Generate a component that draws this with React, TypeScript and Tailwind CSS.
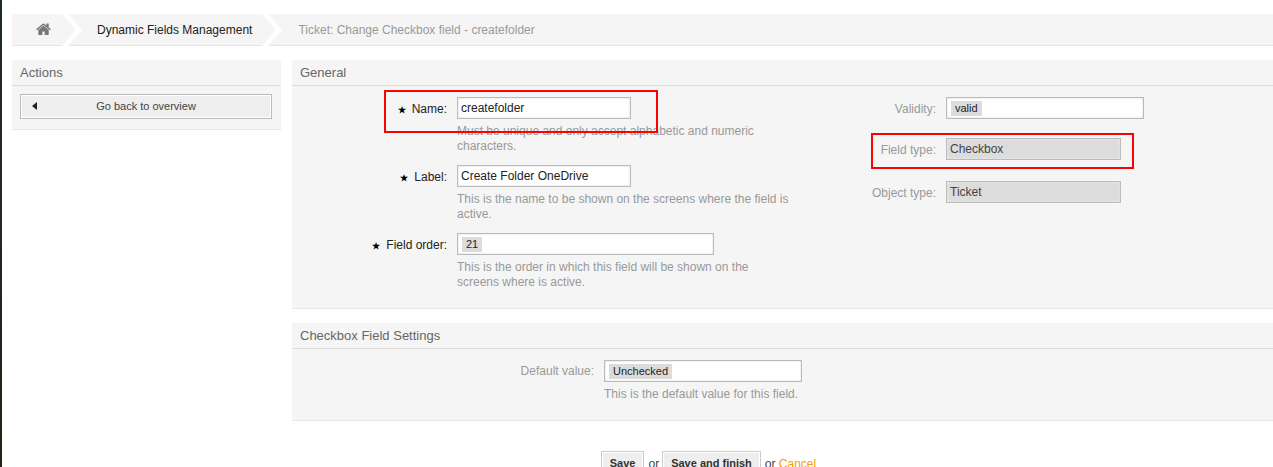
import React from "react";

function Star() {
  return <span className="text-[9px] font-bold mr-[6px] text-black">★</span>;
}

function Row({ label, req, children, hint }: { label: string; req?: boolean; children: React.ReactNode; hint?: string[] }) {
  return (
    <div className="flex">
      <div className="w-[155px] shrink-0 text-right pt-[1px] leading-[22px] text-[12px] text-[#222]">
        {req && <Star />}
        {label}:
      </div>
      <div className="ml-[10px]">
        {children}
        {hint && (
          <div className="mt-[5px] text-[12px] leading-[15px] text-[#999]">
            {hint.map((h) => (
              <div key={h}>{h}</div>
            ))}
          </div>
        )}
      </div>
    </div>
  );
}

function Box({ w, children, disabled }: { w: string; children: React.ReactNode; disabled?: boolean }) {
  return (
    <div className={`${w} h-[22px] border border-[#bbb] flex items-center pl-[3px] text-[12px] ${disabled ? "bg-[#dcdcdc] text-[#444] shadow-[inset_0_0_3px_#f0f0f0]" : "bg-white text-[#222] shadow-[inset_0_0_2px_#ccc]"}`}>
      {children}
    </div>
  );
}

function Tag({ children }: { children: React.ReactNode }) {
  return <span className="bg-[#dcdcdc] h-[15px] leading-[15px] px-[4px] text-[11px] text-[#222] ml-[1px]">{children}</span>;
}

function Chevron({ x }: { x: string }) {
  return (
    <svg width="22" height="32" viewBox="0 0 22 32" className={`shrink-0 ${x}`}>
      <path d="M0 0 L6 0 L20 16 L6 32 L0 32 L14 16 Z" fill="#ffffff" />
    </svg>
  );
}

function Field({ label, children }: { label: string; children: React.ReactNode }) {
  return (
    <div className="flex">
      <div className="w-[134px] text-right leading-[22px] pt-[1px] text-[#999]">{label}:</div>
      <div className="ml-[10px]">{children}</div>
    </div>
  );
}

export default function App() {
  return (
    <div className="relative w-[1273px] h-[467px] overflow-hidden bg-white font-['Liberation_Sans',Arial,sans-serif] text-[12px]">
      <div className="absolute left-0 top-0 w-[2px] h-full bg-gradient-to-b from-[#1c2b2b] to-[#2a2015]" />
      <div className="pl-[12px] pt-[14px]">
        <nav className="h-[32px] bg-[#f5f5f5] border-b border-[#e6e6e6] flex items-center">
          <svg width="15" height="13" viewBox="0 0 1664 1408" className="ml-[24px] shrink-0">
            <path fill="#777" d="M1408 768v480q0 26-19 45t-45 19H960V928H704v384H320q-26 0-45-19t-19-45V768q0-1 .5-3t.5-3l575-474 575 474q1 2 1 6zm223-69-62 74q-8 9-21 11h-3q-13 0-21-7L832 200 140 777q-12 8-24 7-13-2-21-11l-62-74q-8-10-7-23.5T37 654L756 55q32-26 76-26t76 26l244 204V64q0-14 9-23t23-9h192q14 0 23 9t9 23v408l219 182q10 8 11 21.5t-7 23.5z" />
          </svg>
          <Chevron x="ml-[11px]" />
          <span className="ml-[13px] text-[#222] whitespace-nowrap">Dynamic Fields Management</span>
          <Chevron x="ml-[10px]" />
          <span className="ml-[14px] text-[#999] whitespace-nowrap">Ticket: Change Checkbox field - createfolder</span>
        </nav>

        <div className="flex mt-[14px]">
          <aside className="w-[269px] shrink-0 self-start h-[70px] bg-[#f5f5f5] border-b border-[#e6e6e6]">
            <h2 className="h-[26px] leading-[25px] px-[8px] text-[13px] text-[#666] border-b border-[#ddd]">Actions</h2>
            <div className="pl-[8px] pr-[9px] pt-[8px]">
              <button className="relative w-full h-[25px] bg-[#eee] border border-[#bbb] shadow-[inset_0_0_0_1px_#fff] text-[11px] text-[#444] flex items-center justify-center">
                <svg width="5" height="8" viewBox="0 0 5 8" className="absolute left-[11px] top-[7px]">
                  <path d="M5 0 L5 8 L0 4 Z" fill="#222" />
                </svg>
                Go back to overview
              </button>
            </div>
          </aside>

          <main className="ml-[11px] flex-1 min-w-0">
            <section className="h-[249px] bg-[#f5f5f5] border-b border-[#e6e6e6]">
              <h2 className="h-[26px] leading-[25px] px-[8px] text-[13px] text-[#666] border-b border-[#ddd]">General</h2>
              <div className="flex pt-[11px]">
                <div className="w-[510px] flex flex-col gap-[11px] shrink-0">
                  <Row label="Name" req hint={["Must be unique and only accept alphabetic and numeric", "characters."]}>
                    <Box w="w-[174px]">createfolder</Box>
                  </Row>
                  <Row label="Label" req hint={["This is the name to be shown on the screens where the field is", "active."]}>
                    <Box w="w-[174px]">Create Folder OneDrive</Box>
                  </Row>
                  <Row label="Field order" req hint={["This is the order in which this field will be shown on the", "screens where is active."]}>
                    <Box w="w-[257px]"><Tag>21</Tag></Box>
                  </Row>
                </div>
                <div className="flex flex-col">
                  <Field label="Validity"><Box w="w-[198px]"><Tag>valid</Tag></Box></Field>
                  <div className="mt-[18px]">
                    <Field label="Field type"><Box w="w-[175px]" disabled>Checkbox</Box></Field>
                  </div>
                  <div className="mt-[20px]">
                    <Field label="Object type"><Box w="w-[175px]" disabled>Ticket</Box></Field>
                  </div>
                </div>
              </div>
            </section>

            <section className="mt-[14px] h-[98px] bg-[#f5f5f5] border-b border-[#e6e6e6]">
              <h2 className="h-[26px] leading-[25px] px-[8px] text-[13px] text-[#666] border-b border-[#ddd]">Checkbox Field Settings</h2>
              <div className="flex pt-[11px]">
                <div className="w-[302px] text-right leading-[22px] text-[#999]">Default value:</div>
                <div className="ml-[10px]">
                  <Box w="w-[198px]"><Tag>Unchecked</Tag></Box>
                  <div className="mt-[5px] leading-[15px] text-[#999]">This is the default value for this field.</div>
                </div>
              </div>
            </section>

            <div className="mt-[30px] flex items-start justify-center text-[12px] text-[#444] w-[833px]">
              <button className="h-[24px] px-[8px] bg-[#eee] border border-[#ccc] shadow-[inset_0_0_0_1px_#fff] font-bold text-[11px] text-[#333]">Save</button>
              <span className="mt-[4px] ml-[4px] mr-[3px]">or</span>
              <button className="h-[24px] px-[8px] bg-[#eee] border border-[#ccc] shadow-[inset_0_0_0_1px_#fff] font-bold text-[11px] text-[#333]">Save and finish</button>
              <span className="mt-[4px] ml-[4px]">or <span className="text-[#f4a000]">Cancel</span></span>
            </div>
          </main>
        </div>
      </div>

      <div className="absolute left-[384px] top-[90px] w-[274px] h-[43px] border-[2px] border-[#f00]" />
      <div className="absolute left-[871px] top-[133px] w-[263px] h-[36px] border-[2px] border-[#f00]" />
    </div>
  );
}
